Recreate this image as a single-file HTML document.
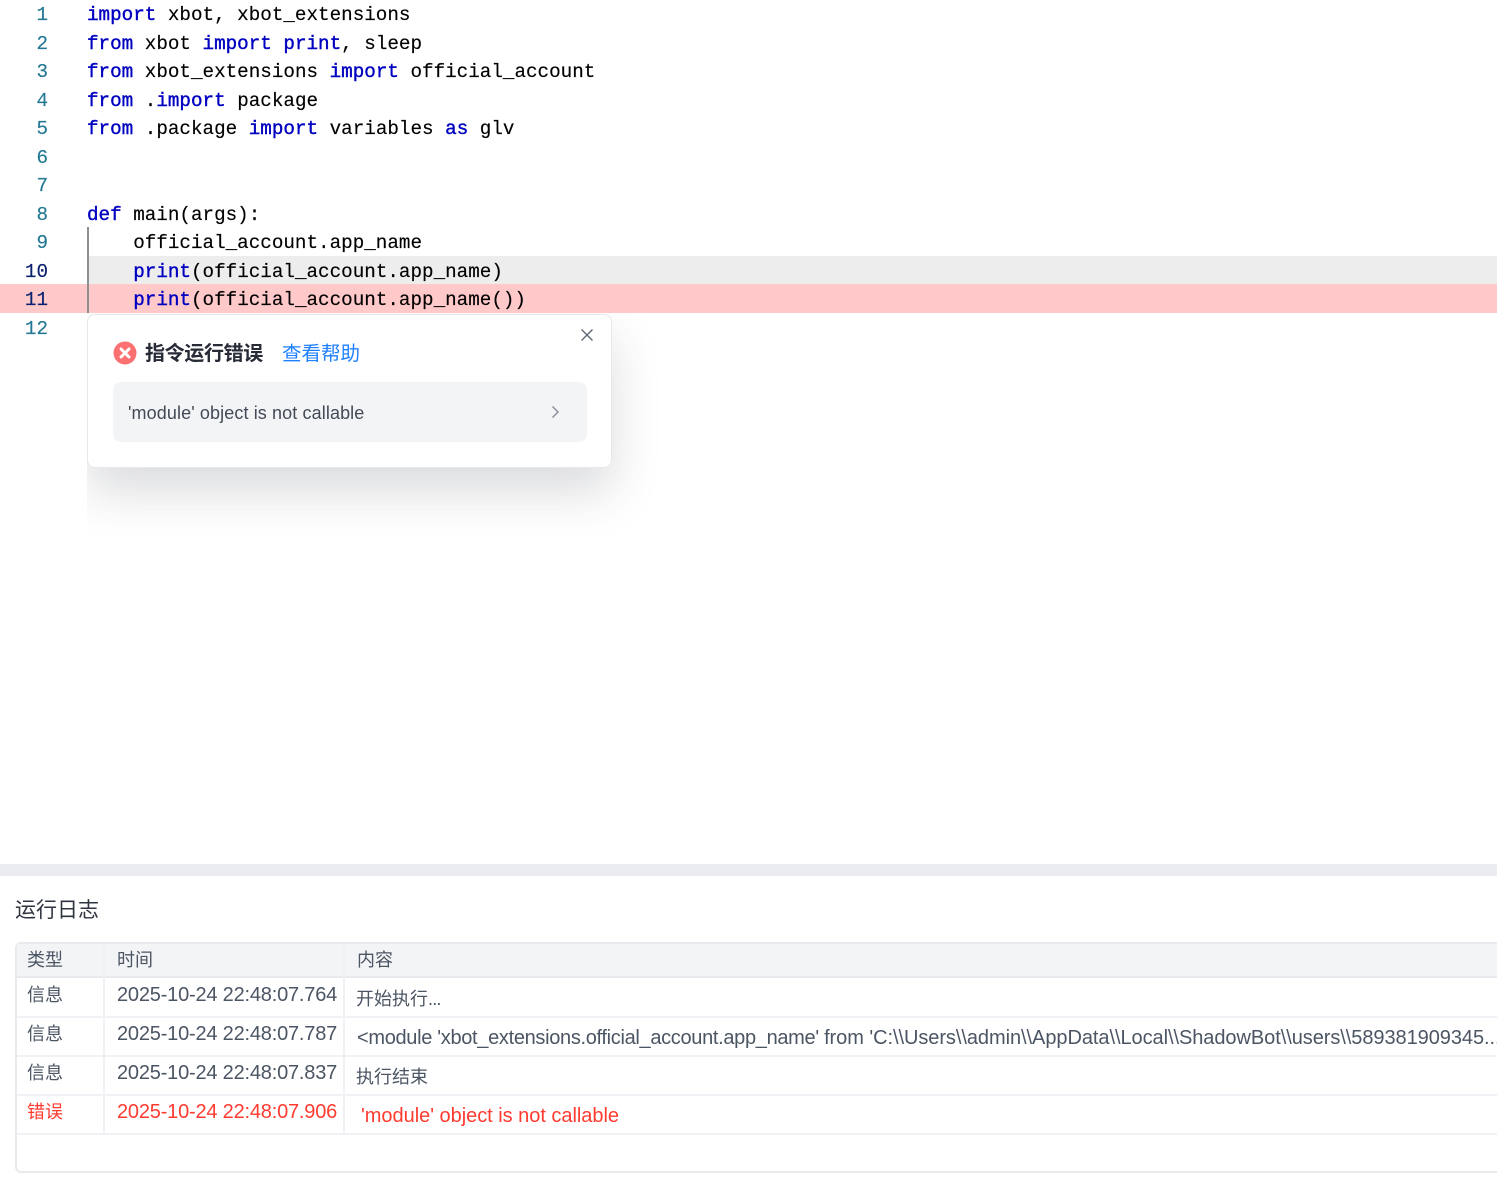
<!DOCTYPE html>
<html lang="zh">
<head>
<meta charset="utf-8">
<title>运行日志</title>
<style>
html,body{margin:0;padding:0;background:#fff;}
body{position:relative;width:1497px;height:1182px;overflow:hidden;font-family:"Liberation Sans","Noto Sans CJK SC",sans-serif;}
.a{position:absolute;}
.ln,.cl{position:absolute;font-family:"Liberation Mono","DejaVu Sans Mono",monospace;font-size:19.25px;line-height:28px;white-space:pre;height:28px;margin-top:1px;-webkit-text-stroke:.15px currentColor;}
.ln{left:0;width:48px;text-align:right;color:#237893;}
.ln.cur{color:#0b216f;}
.cl{left:87px;color:#000;}
.cl b{font-weight:400;color:#0000c0;-webkit-text-stroke:.4px #0000c0;}
.t{position:absolute;white-space:nowrap;font-size:19px;line-height:26px;color:#4b5563;}
.r{color:#ff3b30;}
.hl{position:absolute;left:17px;width:1480px;height:2px;background:#f0f1f4;}
.v{position:absolute;background:#f0f1f4;width:2px;}
.tm{font-size:20px;letter-spacing:-.2px;}
.s{font-size:18px;}
</style>
</head>
<body>
<div class="a" style="left:88px;top:256px;width:1409px;height:28px;background:#eeeded;"></div>
<div class="a" style="left:0;top:284px;width:1497px;height:29px;background:#ffc9c9;"></div>
<div class="a" style="left:87px;top:227px;width:1.5px;height:86px;background:#8f8f8f;"></div>

<div class="ln" style="top:0">1</div>
<div class="ln" style="top:29px">2</div>
<div class="ln" style="top:57px">3</div>
<div class="ln" style="top:86px">4</div>
<div class="ln" style="top:114px">5</div>
<div class="ln" style="top:143px">6</div>
<div class="ln" style="top:171px">7</div>
<div class="ln" style="top:200px">8</div>
<div class="ln" style="top:228px">9</div>
<div class="ln cur" style="top:257px">10</div>
<div class="ln cur" style="top:285px">11</div>
<div class="ln" style="top:314px">12</div>

<div class="cl" style="top:0"><b>import</b> xbot, xbot_extensions</div>
<div class="cl" style="top:29px"><b>from</b> xbot <b>import</b> <b>print</b>, sleep</div>
<div class="cl" style="top:57px"><b>from</b> xbot_extensions <b>import</b> official_account</div>
<div class="cl" style="top:86px"><b>from</b> .<b>import</b> package</div>
<div class="cl" style="top:114px"><b>from</b> .package <b>import</b> variables <b>as</b> glv</div>
<div class="cl" style="top:200px"><b>def</b> main(args):</div>
<div class="cl" style="top:228px">    official_account.app_name</div>
<div class="cl" style="top:257px">    <b>print</b>(official_account.app_name)</div>
<div class="cl" style="top:285px">    <b>print</b>(official_account.app_name())</div>

<!-- popup shadow, clipped to the editor content area -->
<div class="a" style="left:87px;top:313px;width:600px;height:227px;overflow:hidden;">
  <div class="a" style="left:0;top:1px;width:525px;height:154px;border-radius:8px;box-shadow:0 24px 48px rgba(40,45,60,.17);"></div>
</div>
<div class="a" style="left:87px;top:314px;width:523px;height:152px;background:#fff;border:1px solid #e6e8eb;border-radius:8px;"></div>

<svg class="a" style="left:113px;top:341px" width="24" height="24" viewBox="0 0 24 24"><circle cx="12" cy="12" r="11.500" fill="#fb7171"/><path d="M8 8l8 8M16 8l-8 8" stroke="#fff" stroke-width="3" stroke-linecap="round" fill="none"/></svg>
<div class="a" style="left:145px;top:340px;font-size:20px;line-height:28px;font-weight:700;color:#262b36;white-space:nowrap;letter-spacing:-.35px;">指令运行错误</div>
<div class="a" style="left:282px;top:340px;font-size:19.500px;line-height:28px;color:#1e80ff;white-space:nowrap;">查看帮助</div>
<svg class="a" style="left:580px;top:328px" width="14" height="14" viewBox="0 0 14 14"><path d="M1.500 1.500l11 11M12.500 1.500l-11 11" stroke="#5c6470" stroke-width="1.300" fill="none"/></svg>
<div class="a" style="left:113px;top:382px;width:474px;height:60px;background:#f3f4f6;border-radius:8px;"></div>
<div class="a" style="left:128px;top:400px;font-size:18px;line-height:26px;color:#424a57;white-space:nowrap;letter-spacing:.11px;">'module' object is not callable</div>
<svg class="a" style="left:550px;top:405px" width="12" height="14" viewBox="0 0 12 14"><path d="M2.500 1.500l5.500 5.500-5.500 5.500" stroke="#8b9098" stroke-width="1.500" fill="none"/></svg>

<!-- divider -->
<div class="a" style="left:0;top:864px;width:1497px;height:12px;background:#ebecef;"></div>
<div class="a" style="left:15px;top:896px;font-size:21px;line-height:29px;color:#2f3540;white-space:nowrap;">运行日志</div>

<!-- table -->
<div class="a" style="left:15px;top:942px;width:1500px;height:231px;border:2px solid #e8eaed;border-radius:6px;box-sizing:border-box;"></div>
<div class="a" style="left:17px;top:944px;width:1480px;height:32px;background:#f3f4f6;"></div>
<div class="a" style="left:17px;top:976px;width:1480px;height:2px;background:#e8eaed;"></div>
<div class="hl" style="top:1016px"></div>
<div class="hl" style="top:1055px"></div>
<div class="hl" style="top:1094px"></div>
<div class="hl" style="top:1133px"></div>
<div class="v" style="left:103px;top:944px;height:190px;"></div>
<div class="v" style="left:343px;top:944px;height:190px;"></div>

<div class="t s" style="left:27px;top:947px;">类型</div>
<div class="t s" style="left:117px;top:947px;">时间</div>
<div class="t s" style="left:357px;top:947px;">内容</div>

<div class="t s" style="left:27px;top:982px;">信息</div>
<div class="t tm" style="left:117px;top:982px;">2025-10-24 22:48:07.764</div>
<div class="t s" style="left:356px;top:986px;">开始执行<span style="letter-spacing:-.8px">...</span></div>

<div class="t s" style="left:27px;top:1021px;">信息</div>
<div class="t tm" style="left:117px;top:1021px;">2025-10-24 22:48:07.787</div>
<div class="t" style="left:357px;top:1025px;font-size:20px;letter-spacing:-.32px;">&lt;module 'xbot_extensions.official_account.app_name' <span style="letter-spacing:-.06px">from 'C:\\Users\\admin\\AppData\\Local\\ShadowBot\\users\\589381909345...</span></div>

<div class="t s" style="left:27px;top:1060px;">信息</div>
<div class="t tm" style="left:117px;top:1060px;">2025-10-24 22:48:07.837</div>
<div class="t s" style="left:356px;top:1064px;">执行结束</div>

<div class="t s r" style="left:27px;top:1099px;">错误</div>
<div class="t tm r" style="left:117px;top:1099px;">2025-10-24 22:48:07.906</div>
<div class="t r" style="left:361px;top:1103px;font-size:20px;letter-spacing:-.03px;">'module' object is not callable</div>
</body>
</html>
